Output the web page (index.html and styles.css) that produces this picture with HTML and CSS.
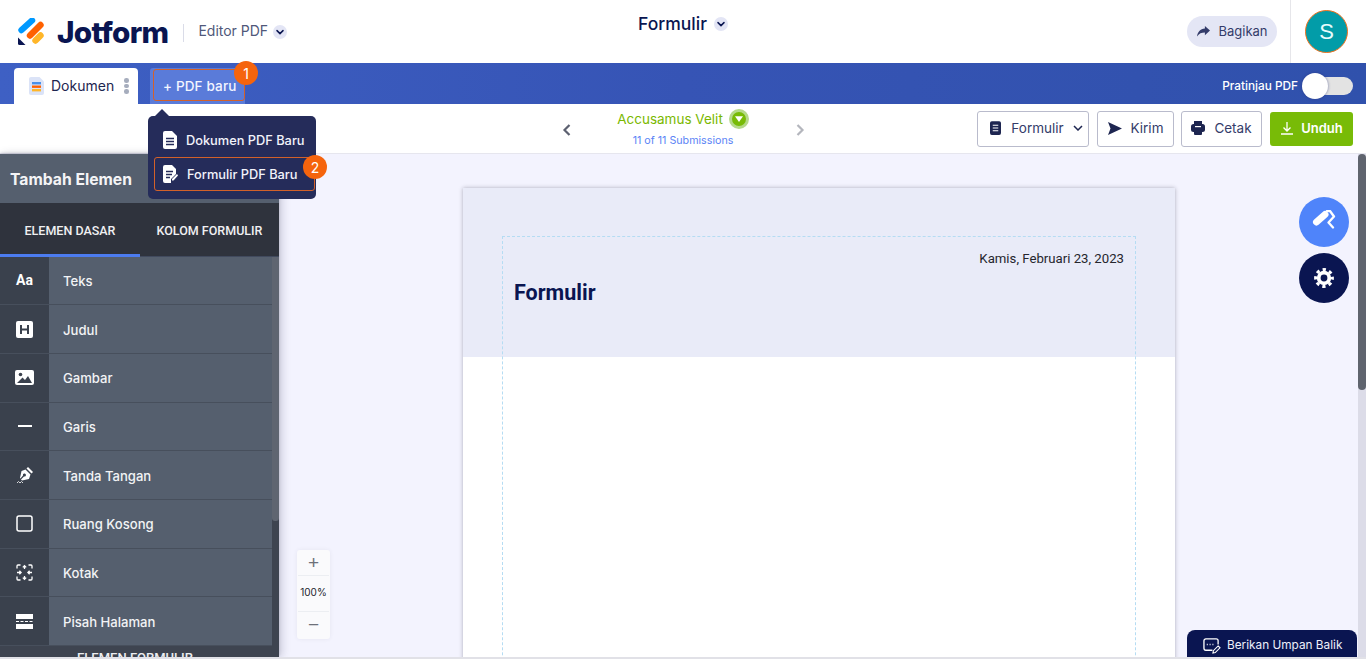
FILE: index.html
```html
<!DOCTYPE html>
<html lang="id">
<head>
<meta charset="utf-8">
<title>Jotform Editor PDF</title>
<link rel="stylesheet" href="styles.css">
</head>
<body>
<div class="app">
  <header class="topbar">
    <div class="brand">
      <svg class="logo" viewBox="0 0 26 28" width="26" height="28">
        <path d="M3.500 12 14 2.500" stroke="#0099ff" stroke-width="6.400" stroke-linecap="round" fill="none"/>
        <path d="M12 17.500 22.500 7" stroke="#ff6100" stroke-width="6.400" stroke-linecap="round" fill="none"/>
        <path d="M17.500 22.500 22.500 17.500" stroke="#ffb629" stroke-width="6.400" stroke-linecap="round" fill="none"/>
        <path d="M0 19.500 7.500 27H1.500Q0 27 0 25.500Z" fill="#0a1551"/>
      </svg>
      <span class="wordmark">Jotform</span>
      <span class="brand-rule"></span>
      <span class="product">Editor PDF</span>
      <span class="chev-dot"><svg viewBox="0 0 14 14" width="14" height="14"><path d="M4 5.600 7 8.600 10 5.600" fill="none" stroke="#0a1551" stroke-width="1.500" stroke-linecap="round" stroke-linejoin="round"/></svg></span>
    </div>
    <div class="doc-title">
      <span class="doc-name">Formulir</span>
      <span class="chev-dot"><svg viewBox="0 0 14 14" width="14" height="14"><path d="M4 5.600 7 8.600 10 5.600" fill="none" stroke="#0a1551" stroke-width="1.500" stroke-linecap="round" stroke-linejoin="round"/></svg></span>
    </div>
    <div class="account">
      <button class="share"><svg viewBox="0 0 16 14" width="15" height="13"><path d="M9.500 1 15 6 9.500 11V8C6 8 3 9 1 12.500 1.500 8 4.500 4.200 9.500 3.800Z" fill="#343c6a"/></svg>Bagikan</button>
      <div class="account-box"><span class="avatar">S</span></div>
    </div>
  </header>

  <nav class="tabbar">
    <div class="tabs">
      <div class="tab">
        <svg viewBox="0 0 15 18" width="15" height="18"><path d="M2 0H10.500L15 4.500V16a2 2 0 0 1-2 2H2a2 2 0 0 1-2-2V2a2 2 0 0 1 2-2Z" fill="#dbe3f7"/><rect x="3" y="5" width="9" height="2.400" fill="#4a90e8"/><rect x="3" y="8.500" width="9" height="2.400" fill="#ff6100"/><rect x="3" y="12" width="9" height="2.400" fill="#ffb629"/></svg>
        <span class="tab-name">Dokumen</span>
        <span class="tab-dots"><i></i><i></i><i></i></span>
      </div>
      <div class="new-pdf"><span class="new-pdf-inner">+ PDF baru</span></div>
    </div>
    <div class="preview"><span>Pratinjau PDF</span><span class="switch"><i></i></span></div>
  </nav>

  <section class="toolbar">
    <div></div>
    <div class="submission">
      <svg class="nav-arrow" viewBox="0 0 10 14" width="10" height="14"><path d="M7.500 2 2.500 7 7.500 12" fill="none" stroke="#5c6070" stroke-width="2.200"/></svg>
      <div class="sub-info">
        <div class="sub-name">Accusamus Velit<span class="sub-dot"><svg viewBox="0 0 10 8" width="10" height="8"><path d="M1 1.200H9L5 7Z" fill="#fff"/></svg></span></div>
        <div class="sub-count">11 of 11 Submissions</div>
      </div>
      <svg class="nav-arrow" viewBox="0 0 10 14" width="10" height="14"><path d="M2.500 2 7.500 7 2.500 12" fill="none" stroke="#b4b6bd" stroke-width="2.200"/></svg>
    </div>
    <div class="actions">
      <button class="btn btn-form"><svg viewBox="0 0 12 15" width="11" height="14"><rect width="12" height="15" rx="2" fill="#1d2550"/><path d="M3 4.500H9M3 7.500H9M3 10.500H9" stroke="#fff" stroke-width="1.200"/></svg>Formulir<svg class="btn-chev" viewBox="0 0 10 6" width="10" height="6"><path d="M1 1 5 5 9 1" fill="none" stroke="#1d2550" stroke-width="1.500"/></svg></button>
      <button class="btn btn-send"><svg viewBox="0 0 14 13" width="14" height="13"><path d="M0 0 14 6.500 0 13 2.500 6.500Z" fill="#1d2550"/></svg>Kirim</button>
      <button class="btn btn-print"><svg viewBox="0 0 14 14" width="14" height="14"><path d="M3 0H11V3H3Z" fill="#1d2550"/><rect y="3" width="14" height="8" rx="2.500" fill="#1d2550"/><rect x="3" y="9" width="8" height="5" rx="1" fill="#1d2550"/><rect x="4" y="5" width="6" height="1.200" fill="#fff"/></svg>Cetak</button>
      <button class="btn-download"><svg viewBox="0 0 14 14" width="14" height="14"><path d="M7 1V9.500M3.500 6.500 7 10 10.500 6.500M1 13H13" fill="none" stroke="#fff" stroke-width="1.300"/></svg>Unduh</button>
    </div>
  </section>

  <main class="workspace">
    <aside class="sidebar">
      <h2 class="side-title">Tambah Elemen</h2>
      <div class="side-tabs">
        <div class="side-tab is-active">ELEMEN DASAR</div>
        <div class="side-tab">KOLOM FORMULIR</div>
      </div>
      <div class="side-body">
        <ul class="elements">
          <li><span class="el-icon el-aa">Aa</span><span class="el-label">Teks</span></li>
          <li><span class="el-icon"><svg viewBox="0 0 17 17" width="17" height="17"><rect width="17" height="17" rx="2" fill="#fff"/><path d="M5 4V13M12 4V13M5 8.500H12" stroke="#3a414d" stroke-width="2" fill="none"/></svg></span><span class="el-label">Judul</span></li>
          <li><span class="el-icon"><svg viewBox="0 0 19 15" width="19" height="15"><rect width="19" height="15" rx="2" fill="#fff"/><circle cx="5.500" cy="4.500" r="1.800" fill="#3a414d"/><path d="M2 13 7.500 7.500 10 10 13 6 17 13Z" fill="#3a414d"/></svg></span><span class="el-label">Gambar</span></li>
          <li><span class="el-icon"><svg viewBox="0 0 14 2" width="14" height="2"><rect width="14" height="2" fill="#fff"/></svg></span><span class="el-label">Garis</span></li>
          <li><span class="el-icon"><svg viewBox="0 0 18 18" width="18" height="18"><path d="M12 1 17 6 15.500 7.500 10.500 2.500Z" fill="#fff"/><path d="M9.500 3.500 14.500 8.500 13 13 6 14.500 5 13.500 8 10.500A1.500 1.500 0 1 0 7 9.500L4.500 12.500 4 12 5.500 5Z" fill="#fff"/><path d="M1 17 2.500 15.500 4 17 5.500 15.500 7 17" fill="none" stroke="#fff" stroke-width=".8"/></svg></span><span class="el-label">Tanda Tangan</span></li>
          <li><span class="el-icon"><svg viewBox="0 0 17 17" width="17" height="17"><rect x="1" y="1" width="15" height="15" rx="2" fill="none" stroke="#fff" stroke-width="1.500"/></svg></span><span class="el-label">Ruang Kosong</span></li>
          <li><span class="el-icon"><svg viewBox="0 0 17 17" width="17" height="17"><path d="M1 4.500V2a1 1 0 0 1 1-1H4.500M12.500 1H15a1 1 0 0 1 1 1V4.500M16 12.500V15a1 1 0 0 1-1 1H12.500M4.500 16H2a1 1 0 0 1-1-1V12.500M1 8.500H5M12 8.500H16M8.500 1.500V5M8.500 12V15.500M6.800 3.400 8.500 1.700 10.200 3.400M6.800 13.600 8.500 15.300 10.200 13.600M3.400 6.800 5.100 8.500 3.400 10.200M13.600 6.800 11.900 8.500 13.600 10.200" fill="none" stroke="#fff" stroke-width="1.300"/></svg></span><span class="el-label">Kotak</span></li>
          <li><span class="el-icon"><svg viewBox="0 0 17 15" width="17" height="15"><rect width="17" height="5" fill="#fff"/><rect y="10" width="17" height="5" fill="#fff"/><path d="M0 7.500H17" stroke="#fff" stroke-width="1.200" stroke-dasharray="3 1.500"/></svg></span><span class="el-label">Pisah Halaman</span></li>
        </ul>
        <div class="side-section">ELEMEN FORMULIR</div>
        <span class="side-thumb"></span>
      </div>
    </aside>

    <div class="canvas">
      <article class="sheet">
        <div class="sheet-head"></div>
        <div class="sheet-frame">
          <div class="sheet-date">Kamis, Februari 23, 2023</div>
          <h1 class="sheet-title">Formulir</h1>
        </div>
      </article>
    </div>

    <div class="scrollbar"><span></span></div>

    <button class="fab fab-paint"><svg viewBox="0 0 24 24" width="24" height="24"><path d="M4.500 12 13 4.500" fill="none" stroke="#fff" stroke-width="7" stroke-linecap="round"/><path d="M15 1H18L22 6.500 16.500 12.500 21 17.500" fill="none" stroke="#fff" stroke-width="2.300" stroke-linejoin="round" stroke-linecap="round"/></svg></button>
    <button class="fab fab-gear"><svg viewBox="0 0 20 20" width="20" height="20"><circle cx="10" cy="10" r="5.300" fill="none" stroke="#fff" stroke-width="3.800"/><circle cx="10" cy="10" r="8.400" fill="none" stroke="#fff" stroke-width="3" stroke-dasharray="3.300 3.298" stroke-dashoffset="1.650"/></svg></button>

    <div class="zoom">
      <span class="zoom-btn">+</span>
      <span class="zoom-val">100%</span>
      <span class="zoom-btn">−</span>
    </div>

    <button class="feedback"><svg viewBox="0 0 20 18" width="19" height="17"><path d="M16 8V4a2 2 0 0 0-2-2H3a2 2 0 0 0-2 2v8a2 2 0 0 0 2 2h7" fill="none" stroke="#fff" stroke-width="1.400" transform="translate(1 0)"/><path d="M5 8H6M8 8H9M11 8H12" stroke="#fff" stroke-width="1.500"/><path d="M17 9.500 19 11.500 14 16.500 11.500 17 12 14.500Z" fill="none" stroke="#fff" stroke-width="1.200"/></svg>Berikan Umpan Balik</button>
  </main>
  <div class="page-edge"></div>

  <div class="menu">
    <div class="menu-item"><svg viewBox="0 0 14 18" width="14" height="18"><path d="M2 0H9L14 5V16a2 2 0 0 1-2 2H2a2 2 0 0 1-2-2V2a2 2 0 0 1 2-2Z" fill="#fff"/><path d="M3 7.500H11M3 10.500H11M3 13.500H11" stroke="#252c5a" stroke-width="1.400"/></svg>Dokumen PDF Baru</div>
    <div class="menu-item is-picked"><svg viewBox="0 0 15 18" width="15" height="18"><path d="M2 0H9L13 4V9L8 14V18H2a2 2 0 0 1-2-2V2a2 2 0 0 1 2-2Z" fill="#fff"/><path d="M3 6.500H10M3 9.500H9M3 12.500H7" stroke="#252c5a" stroke-width="1.400"/><path d="M14 9 15 10.500 10.500 15.500H9V14Z" fill="#fff"/></svg>Formulir PDF Baru</div>
  </div>
  <span class="badge badge-one">1</span>
  <span class="badge badge-two">2</span>
</div>
</body>
</html>
```
FILE: styles.css
```css
* { box-sizing: border-box; }
html, body { margin: 0; height: 100%; overflow: hidden; }
body { font-family: "Inter", "Liberation Sans", sans-serif; color: #0a1551; background: #fff; }
button { font: inherit; cursor: pointer; }
h1, h2, ul { margin: 0; padding: 0; }

.app { position: relative; width: 1366px; height: 659px; display: flex; flex-direction: column; overflow: hidden; }

/* top bar */
.topbar { height: 63px; flex: none; display: grid; grid-template-columns: 1fr auto 1fr; align-items: center; background: #fff; }
.brand { display: flex; align-items: center; padding-left: 18px; }
.wordmark { margin-left: 13px; font-size: 29.700px; font-weight: 800; letter-spacing: -0.700px; color: #0a1551; }
.brand-rule { width: 1px; height: 18px; margin: 2px 14px 0 15px; background: #dadce8; }
.product { font-size: 14px; color: #50587a; margin: -2px 5px 0 0; }
.chev-dot { width: 14px; height: 14px; border-radius: 50%; background: #e3e5f5; display: inline-flex; }
.doc-title { display: flex; align-items: center; gap: 7px; font-size: 17.500px; font-weight: 500; margin-top: -15px; }
.doc-name { margin-top: -2px; }
.account { display: flex; justify-content: flex-end; align-items: center; height: 63px; }
.share { height: 31px; width: 90px; margin-top: -1px; border: 0; border-radius: 16px; background: #e4e6f5; color: #343c6a; font-size: 13px; display: flex; align-items: center; justify-content: center; gap: 7px; }
.account-box { width: 76px; height: 63px; margin-left: 13px; border-left: 1px solid #e6e6ea; display: flex; align-items: center; padding-left: 14px; }
.avatar { width: 43px; height: 43px; border-radius: 50%; background: #029ca8; border: 1px solid #f2711c; color: #e8fbfc; font-size: 22px; font-family: "Liberation Sans", sans-serif; display: flex; align-items: center; justify-content: center; }

/* tab bar */
.tabbar { height: 41px; flex: none; display: flex; justify-content: space-between; background: linear-gradient(90deg, #3e60c4 0%, #3654b5 50%, #3051ac 100%); padding: 5px 13px 0 14px; }
.tabs { display: flex; gap: 12px; }
.tab { width: 124px; height: 36px; border-radius: 4px 4px 0 0; background: #fff; display: flex; align-items: center; padding-left: 15px; gap: 7px; font-size: 14px; color: #1d2550; }
.tab-name { margin-top: -2px; }
.tab-dots { display: flex; flex-direction: column; gap: 1px; margin-left: 3px; }
.tab-dots i { width: 4.500px; height: 4.500px; border-radius: 50%; background: #a6adbd; }
.new-pdf { width: 95px; height: 36px; background: #5a7bd9; border-radius: 3px 0 0 0; padding: 1px 0 3px 3px; }
.new-pdf-inner { display: flex; height: 100%; align-items: center; padding: 2px 0 0 9px; border: 1px solid #d2612a; border-radius: 3px; color: #f3f5ff; font-size: 13.500px; font-weight: 500; letter-spacing: .15px; }
.preview { display: flex; align-items: center; height: 36px; font-size: 11.800px; font-weight: 500; color: #fff; }
.switch { position: relative; width: 50px; height: 18px; margin-left: 5px; border-radius: 9px; background: #e3e3e3; }
.switch i { position: absolute; left: -1px; top: -4px; width: 26px; height: 26px; border-radius: 50%; background: #fff; box-shadow: 0 0 3px rgba(40, 50, 120, .6); }

/* toolbar */
.toolbar { height: 50px; flex: none; display: grid; grid-template-columns: 1fr auto 1fr; align-items: center; background: #fff; border-bottom: 1px solid #e6e6ee; padding: 0 13px; }
.submission { display: flex; align-items: center; gap: 46px; }
.nav-arrow { flex: none; margin-top: 2px; }
.sub-info { display: flex; flex-direction: column; align-items: center; width: 133px; margin: 0 -1px; }
.sub-name { display: flex; align-items: center; height: 24px; color: #7ab800; font-size: 13.500px; white-space: nowrap; margin-top: -3px; }
.sub-dot { width: 20px; height: 20px; margin-left: 6px; border-radius: 50%; background: #78bb07; border: 3px solid #b5d98a; display: inline-flex; align-items: center; justify-content: center; }
.sub-count { margin-top: 3px; color: #5b84f6; font-size: 10.700px; white-space: nowrap; }
.actions { display: flex; justify-content: flex-end; align-items: center; gap: 8px; }
.btn { height: 36px; padding: 0 0 1px; background: #fff; border: 1px solid #b9bbcc; border-radius: 3px; color: #343c6a; font-size: 13.500px; display: flex; align-items: center; justify-content: center; gap: 9px; }
.btn-form { width: 112px; padding-left: 7px; gap: 10px; }
.btn-chev { margin-left: -1px; }
.btn-send { width: 77px; }
.btn-print { width: 81px; margin-left: -1px; }
.btn-download { width: 83px; height: 34px; padding: 0 0 1px; border: 0; border-radius: 3px; background: #78bb07; color: #fff; font-size: 13px; font-weight: 600; display: flex; align-items: center; justify-content: center; gap: 7px; }

/* workspace */
.workspace { position: relative; flex: 1; min-height: 0; display: flex; background: #f3f3fe; }
.sidebar { width: 279px; flex: none; display: flex; flex-direction: column; background: #555f6e; box-shadow: 3px 0 8px rgba(60, 60, 90, .22), 0 -1px 3px rgba(60, 60, 90, .2); z-index: 1; }
.side-title { height: 49px; flex: none; display: flex; align-items: center; padding: 2px 0 0 10px; color: #f4f4f6; font-size: 15.700px; font-weight: 700; background: #555f6e; }
.side-tabs { height: 53.500px; flex: none; display: grid; grid-template-columns: 140px 139px; background: #2f333d; border-bottom: 1px solid #414a5e; }
.side-tab { display: flex; align-items: center; justify-content: center; font-family: Roboto, sans-serif; color: #f0f0f2; font-size: 12.500px; font-weight: 500; padding-top: 2px; }
.side-tab.is-active { box-shadow: inset 0 -3px 0 #4c7cf0; height: 53.500px; }
.side-body { position: relative; flex: 1; min-height: 0; padding-right: 7px; background: #3e4450; overflow: hidden; }
.elements { list-style: none; }
.elements li { height: 48.700px; display: flex; border-bottom: 1px solid #474f5c; background: #555f6e; }
.el-icon { width: 49px; flex: none; background: #3a414d; display: flex; align-items: center; justify-content: center; color: #fff; }
.el-aa { font-family: Roboto, sans-serif; font-size: 14px; font-weight: 700; }
.el-label { padding: 1px 0 0 14px; display: flex; align-items: center; color: #f2f3f5; font-size: 13.100px; font-weight: 500; }
.side-section { height: 14px; padding-left: 77px; color: #eceef1; font-family: Roboto, sans-serif; font-size: 13px; font-weight: 500; line-height: 24px; white-space: nowrap; }
.side-thumb { position: absolute; right: 0; top: 0; width: 7px; height: 264px; background: #5f6571; border-radius: 0 0 3px 3px; }

.canvas { flex: 1; min-width: 0; padding-top: 34px; overflow: hidden; }
.sheet { position: relative; width: 712px; height: 700px; margin: 0 auto 0 184px; background: #fff; box-shadow: 0 0 4px rgba(40, 40, 60, .35); }
.sheet-head { height: 169px; background: #e9ebf8; }
.sheet-frame { position: absolute; left: 39px; top: 48px; width: 634px; height: 640px; border: 1px dashed #b5dcf3; padding: 14px 11px; }
.sheet-date { text-align: right; font-family: Roboto, sans-serif; font-size: 13.200px; line-height: 15px; color: #26262e; }
.sheet-title { margin-top: 14px; font-family: Roboto, sans-serif; font-size: 21.500px; font-weight: 700; color: #0a1551; }

.scrollbar { width: 8px; flex: none; background: #dcdce8; }
.scrollbar span { display: block; height: 236px; border-radius: 4px; background: #5f646e; }

.fab { position: absolute; left: 1299px; width: 50px; height: 50px; padding: 0; border: 0; border-radius: 50%; display: flex; align-items: center; justify-content: center; }
.fab-paint { top: 43px; background: #4f84fa; }
.fab-gear { top: 99px; background: #0a1551; }

.zoom { position: absolute; left: 297px; top: 396px; width: 33px; height: 89px; background: #fafafc; border-radius: 3px; display: flex; flex-direction: column; align-items: center; box-shadow: 0 0 4px rgba(60, 60, 90, .08); z-index: 2; }
.zoom-btn { height: 26px; width: 100%; flex: none; display: flex; align-items: center; justify-content: center; color: #6d7079; font-size: 19px; font-family: "Liberation Sans", sans-serif; }
.zoom-val { height: 37px; width: 31px; flex: none; display: flex; align-items: center; justify-content: center; margin-top: -1px; padding-bottom: 3px; border-top: 1px solid #eceef2; border-bottom: 1px solid #eceef2; color: #22242c; font-size: 10px; }

.feedback { position: absolute; left: 1187px; bottom: -2px; width: 170px; height: 29px; padding: 1px 0 0 15px; border: 0; border-radius: 8px 8px 0 0; background: #0a1551; color: #eef0fa; font-size: 11.800px; display: flex; align-items: center; gap: 6px; }
.page-edge { height: 2px; flex: none; background: #e1e1e7; position: relative; z-index: 3; }

/* over everything */
.menu { position: absolute; left: 148px; top: 116px; width: 168px; height: 83px; padding: 7px 1px 0 6px; border-radius: 5px; background: #252c5a; z-index: 4; }
.menu::before { content: ""; position: absolute; left: 7px; top: -7px; border-left: 7px solid transparent; border-right: 7px solid transparent; border-bottom: 7px solid #252c5a; }
.menu-item { height: 34px; display: flex; align-items: center; gap: 9px; padding-left: 8px; color: #f2f3fa; font-size: 12.800px; font-weight: 500; border: 1px solid transparent; border-radius: 3px; white-space: nowrap; }
.menu-item.is-picked { border-color: #d2612a; }
.badge { position: absolute; width: 24px; height: 24px; border-radius: 50%; background: #f5640d; color: #fff; font-size: 14px; display: flex; align-items: center; justify-content: center; z-index: 5; }
.badge-one { left: 234px; top: 61px; }
.badge-two { left: 303px; top: 155px; }
```
